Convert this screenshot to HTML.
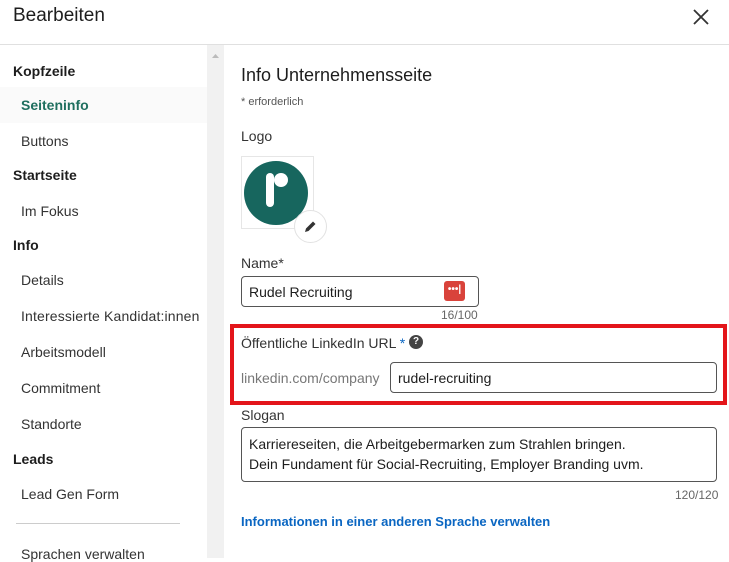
<!DOCTYPE html>
<html><head><meta charset="utf-8"><style>
*{margin:0;padding:0;box-sizing:border-box}
body{width:729px;height:558px;overflow:hidden;background:#fff;font-family:"Liberation Sans",sans-serif;color:#1d1d1d;position:relative}
.a{position:absolute;white-space:nowrap}
.hdr{font-size:19px;left:13px;top:5px}
.line{position:absolute;left:0;top:44px;width:729px;height:1px;background:#e0e0e0}
.sb{position:absolute;left:207px;top:45px;width:17px;height:513px;background:#f1f1f1}
.h{font-weight:bold;font-size:14px;left:13px}
.i{left:21px;font-size:14px;color:#333}
.inp{position:absolute;border:1px solid #555;border-radius:4px;background:#fff}
</style></head><body>
<div class="a hdr">Bearbeiten</div>
<svg class="a" style="left:691px;top:7px" width="20" height="20"><path d="M3 3L17 17M17 3L3 17" stroke="#333" stroke-width="1.8"/></svg>
<div class="line"></div>
<div class="sb"><svg width="17" height="12" style="position:absolute;top:5px"><path d="M5 8L8.5 4L12 8Z" fill="#bbb"/></svg></div>
<div class="a" style="left:0;top:87px;width:207px;height:36px;background:#fafafa"></div>
<div class="a h" style="top:63px">Kopfzeile</div>
<div class="a i" style="top:97px;color:#1f6f5f;font-weight:bold">Seiteninfo</div>
<div class="a i" style="top:133px">Buttons</div>
<div class="a h" style="top:167px">Startseite</div>
<div class="a i" style="top:203px">Im Fokus</div>
<div class="a h" style="top:237px">Info</div>
<div class="a i" style="top:272px">Details</div>
<div class="a i" style="top:308px;letter-spacing:0.15px">Interessierte Kandidat:innen</div>
<div class="a i" style="top:344px">Arbeitsmodell</div>
<div class="a i" style="top:380px">Commitment</div>
<div class="a i" style="top:416px">Standorte</div>
<div class="a h" style="top:451px">Leads</div>
<div class="a i" style="top:486px">Lead Gen Form</div>
<div class="a" style="left:16px;top:523px;width:164px;height:1px;background:#ccc"></div>
<div class="a i" style="top:546px">Sprachen verwalten</div>

<div class="a" style="left:241px;top:65px;font-size:18px">Info Unternehmensseite</div>
<div class="a" style="left:241px;top:96px;font-size:11px;color:#555">* erforderlich</div>
<div class="a" style="left:241px;top:128px;font-size:14px;color:#333">Logo</div>
<div class="a" style="left:241px;top:156px;width:73px;height:73px;border:1px solid #e6e6e6"></div>
<div class="a" style="left:244px;top:161px;width:64px;height:64px;border-radius:50%;background:#17665e"></div>
<div class="a" style="left:266px;top:173px;width:8px;height:34px;border-radius:4px;background:#fff"></div>
<div class="a" style="left:274px;top:173px;width:14px;height:14px;border-radius:7px;background:#fff"></div>
<div class="a" style="left:294px;top:210px;width:33px;height:33px;border-radius:50%;background:#fff;border:1px solid #e2e2e2"></div>
<svg class="a" style="left:303px;top:219px" width="15" height="15"><path d="M2 13L3 9.5L10 2.5L12.5 5L5.5 12Z" fill="#333"/></svg>
<div class="a" style="left:241px;top:255px;font-size:14px;color:#333">Name*</div>
<div class="inp" style="left:241px;top:276px;width:238px;height:31px"></div>
<div class="a" style="left:249px;top:284px;font-size:14px">Rudel Recruiting</div>
<div class="a" style="left:444px;top:281px;width:21px;height:20px;border-radius:3px;background:#d9433b;color:#fff;font-size:10px;text-align:center;line-height:18px;font-weight:bold">•••|</div>
<div class="a" style="left:441px;top:308px;font-size:12px;color:#666">16/100</div>
<div class="a" style="left:230px;top:324px;width:497px;height:81px;border:4px solid #e3151a"></div>
<div class="a" style="left:241px;top:335px;font-size:14px;color:#333">Öffentliche LinkedIn URL <span style="color:#0a66c2">*</span></div>
<div class="a" style="left:409px;top:335px;width:14px;height:14px;border-radius:50%;background:#444;color:#fff;font-size:10px;font-weight:bold;text-align:center;line-height:14px">?</div>
<div class="a" style="left:241px;top:370px;font-size:14px;color:#777">linkedin.com/company</div>
<div class="inp" style="left:390px;top:362px;width:327px;height:31px"></div>
<div class="a" style="left:398px;top:370px;font-size:14px">rudel-recruiting</div>
<div class="a" style="left:241px;top:407px;font-size:14px;color:#333">Slogan</div>
<div class="inp" style="left:241px;top:427px;width:476px;height:55px"></div>
<div class="a" style="left:249px;top:434px;font-size:14px;line-height:20px">Karriereseiten, die Arbeitgebermarken zum Strahlen bringen.<br>Dein Fundament für Social-Recruiting, Employer Branding uvm.</div>
<div class="a" style="left:675px;top:488px;font-size:12px;color:#666">120/120</div>
<div class="a" style="left:241px;top:514px;font-size:13px;font-weight:bold;color:#0a66c2">Informationen in einer anderen Sprache verwalten</div>
</body></html>
